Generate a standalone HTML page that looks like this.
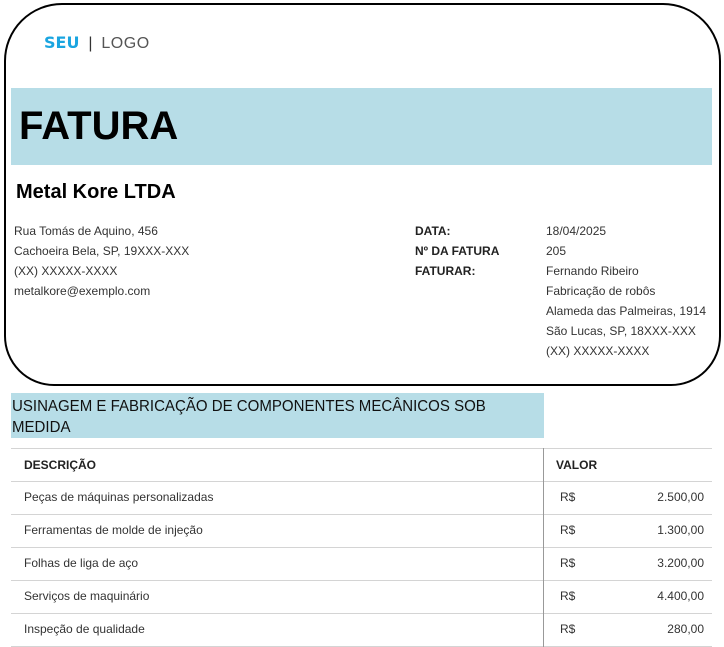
<!DOCTYPE html>
<html><head><meta charset="utf-8"><style>
*{margin:0;padding:0;box-sizing:border-box}
body{width:724px;height:647px;background:#fff;position:relative;overflow:hidden;font-family:"Liberation Sans",sans-serif;color:#222}
.a{position:absolute;white-space:nowrap}
.box{position:absolute;left:4px;top:3px;width:717px;height:383px;border:2px solid #000;border-radius:58px 58px 50px 50px}
.band{position:absolute;background:#b7dde7}
.s{font-size:12px;color:#333}
.b{font-size:12px;font-weight:bold;color:#222}
.hl{position:absolute;left:11px;width:701px;height:1px;background:#d4d4d4}
.row{font-size:12px;color:#333;line-height:15px}
</style></head><body>
<div class="box"></div>
<div class="a" style="left:44px;top:33px;font-size:16px;"><b style="color:#1aa5e0;font-family:'DejaVu Sans',sans-serif;font-weight:900">SEU</b> <span style="color:#333">&nbsp;|&nbsp; </span><span style="color:#555;letter-spacing:0.5px">LOGO</span></div>
<div class="band" style="left:11px;top:88px;width:701px;height:77px"></div>
<div class="a" style="left:19px;top:104px;font-size:40px;font-weight:bold;color:#000">FATURA</div>
<div class="a" style="left:16px;top:181px;font-size:20px;font-weight:bold;color:#000">Metal Kore LTDA</div>
<div class="a s" style="left:14px;top:221px;line-height:20px">Rua Tomás de Aquino, 456<br>Cachoeira Bela, SP, 19XXX-XXX<br>(XX) XXXXX-XXXX<br>metalkore@exemplo.com</div>
<div class="a b" style="left:415px;top:221px;line-height:20px">DATA:<br>Nº DA FATURA<br>FATURAR:</div>
<div class="a s" style="left:546px;top:221px;line-height:20px">18/04/2025<br>205<br>Fernando Ribeiro<br>Fabricação de robôs<br>Alameda das Palmeiras, 1914<br>São Lucas, SP, 18XXX-XXX<br>(XX) XXXXX-XXXX</div>
<div class="band" style="left:11px;top:393px;width:533px;height:45px"></div>
<div class="a" style="left:12px;top:396px;font-size:16px;line-height:21px;color:#111;transform:scaleX(0.94);transform-origin:0 0">USINAGEM E FABRICAÇÃO DE COMPONENTES MECÂNICOS SOB<br>MEDIDA</div>
<div class="hl" style="top:448px"></div>
<div class="hl" style="top:481px"></div>
<div class="hl" style="top:514px"></div>
<div class="hl" style="top:547px"></div>
<div class="hl" style="top:580px"></div>
<div class="hl" style="top:613px"></div>
<div class="hl" style="top:646px"></div>
<div style="position:absolute;left:543px;top:448px;width:1px;height:199px;background:#999"></div>
<div class="a b" style="left:24px;top:458px">DESCRIÇÃO</div>
<div class="a b" style="left:556px;top:458px">VALOR</div>

<div class="a row" style="left:24px;top:490px">Peças de máquinas personalizadas</div>
<div class="a row" style="left:560px;top:490px">R$</div>
<div class="a row" style="right:20px;top:490px">2.500,00</div>

<div class="a row" style="left:24px;top:523px">Ferramentas de molde de injeção</div>
<div class="a row" style="left:560px;top:523px">R$</div>
<div class="a row" style="right:20px;top:523px">1.300,00</div>

<div class="a row" style="left:24px;top:556px">Folhas de liga de aço</div>
<div class="a row" style="left:560px;top:556px">R$</div>
<div class="a row" style="right:20px;top:556px">3.200,00</div>

<div class="a row" style="left:24px;top:589px">Serviços de maquinário</div>
<div class="a row" style="left:560px;top:589px">R$</div>
<div class="a row" style="right:20px;top:589px">4.400,00</div>

<div class="a row" style="left:24px;top:622px">Inspeção de qualidade</div>
<div class="a row" style="left:560px;top:622px">R$</div>
<div class="a row" style="right:20px;top:622px">280,00</div>
</body></html>
